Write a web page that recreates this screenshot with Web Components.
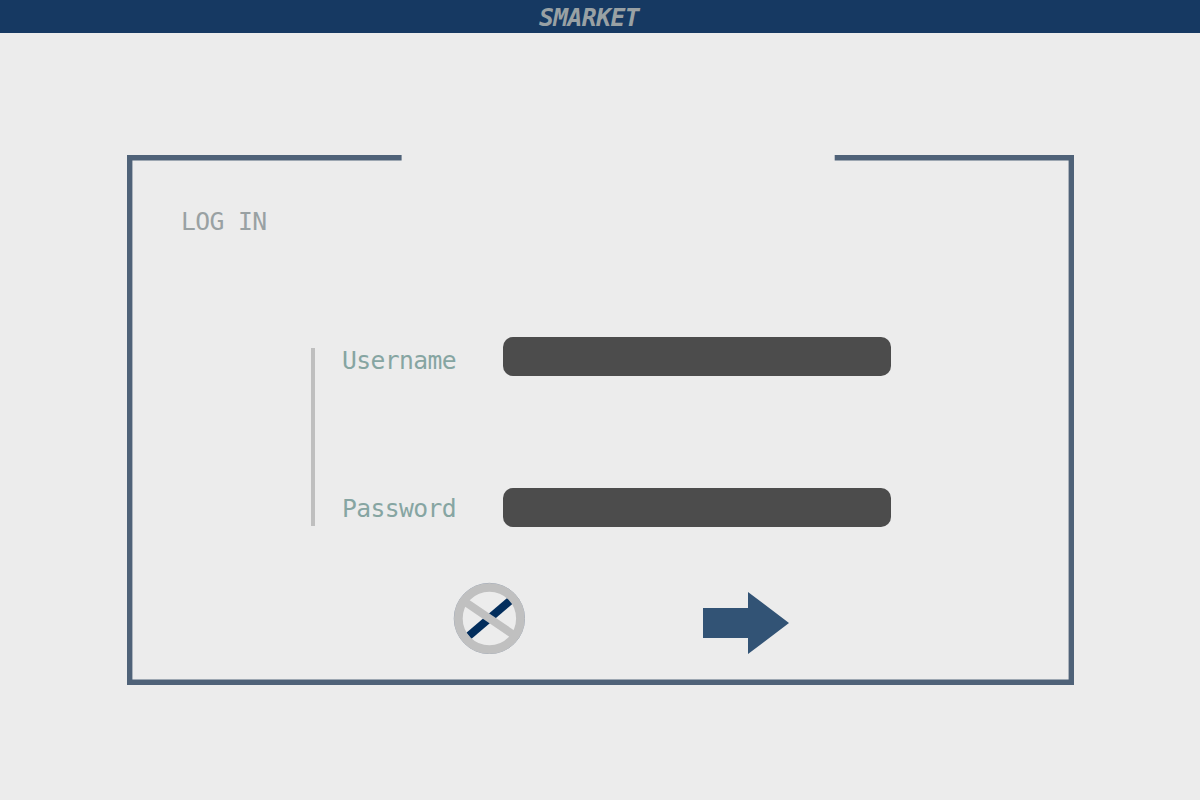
<!DOCTYPE html>
<html lang="en">
<head>
<meta charset="utf-8">
<title>Smarket</title>
<style>
body { margin: 0; background: #ececec; font-family: "DejaVu Sans Mono", monospace; }
</style>
</head>
<body>
<login-page></login-page>
<script>
function define(name, html) {
  customElements.define(name, class extends HTMLElement {
    constructor() {
      super();
      const t = document.createElement('template');
      t.innerHTML = html;
      this.attachShadow({ mode: 'open' }).appendChild(t.content.cloneNode(true));
    }
  });
}

define('app-header', `
<style>
:host { display: flex; justify-content: center; height: 33px; background: #163962; color: #99a1a4;
  box-sizing: border-box; padding-right: 22px; font: italic bold 24.7px/35px "DejaVu Sans Mono", monospace; letter-spacing: -.6px; }
</style><slot></slot>`);

define('open-frame', `
<style>
:host { display: grid; width: 947px; height: 530px; }
svg, .body { grid-area: 1 / 1; }
svg { display: block; }
.body { min-width: 0; z-index: 1; }
</style>
<svg width="947" height="530" viewBox="0 0 947 530" fill="#4f6278"><path d="M0 0H274.6V5.4H5.4V524.6H941.6V5.4H707.7V0H947V530H0Z"/></svg>
<div class="body"><slot></slot></div>`);

define('login-field', `
<style>
:host { display: grid; grid-template-columns: 161px 388px; height: 39px; color: #86a5a2; font-size: 24.7px; letter-spacing: -.6px; }
.label { line-height: 28px; padding-top: var(--label-drop, 10px); }
.input { height: 39px; border-radius: 10px; background: #4c4c4c; }
</style>
<div class="label"><slot></slot></div><div class="input"></div>`);

define('cancel-icon', `
<style>:host { display: block; width: 72px; height: 72px; } svg { display: block; }</style>
<svg width="72" height="72" viewBox="453 582 72 72" fill="none">
<path d="M468.7 636L510.3 600.5" stroke="#032e5d" stroke-width="8"/>
<circle cx="489.4" cy="618.5" r="35.2" stroke="#8c97a8" stroke-width=".8"/>
<path d="M466 602.5L513 634.5" stroke="#c0c0c0" stroke-width="8"/>
<circle cx="489.4" cy="618.5" r="31" stroke="#c0c0c0" stroke-width="8.6"/>
</svg>`);

define('arrow-icon', `
<style>:host { display: block; width: 87px; height: 63px; } svg { display: block; }</style>
<svg width="87" height="63" viewBox="703 592 87 63"><path d="M703 608H748V592L789 623L748 654V638H703Z" fill="#325375"/></svg>`);

define('login-page', `
<style>
:host { display: flex; flex-direction: column; height: 800px; }
open-frame { margin: 122px 0 0 127px; }
h1 { margin: 0; padding: 53px 0 0 54px; font-size: 24.7px; letter-spacing: -.6px; font-weight: 400; line-height: 28px; color: #99a1a3; }
.fields { display: flex; margin: 101px 0 0 184px; }
.rule { width: 4px; height: 178px; margin: 11px 27px 0 0; background: #bfbfbf; }
.rows { display: grid; gap: 112px; height: 190px; }
.second { --label-drop: 7px; }
.actions { display: flex; align-items: flex-start; gap: 178px; margin: 55px 0 0 326px; }
arrow-icon { margin-top: 10px; }
</style>
<app-header>SMARKET</app-header>
<open-frame>
  <h1>LOG IN</h1>
  <div class="fields"><div class="rule"></div>
    <div class="rows"><login-field>Username</login-field><login-field class="second">Password</login-field></div>
  </div>
  <div class="actions"><cancel-icon></cancel-icon><arrow-icon></arrow-icon></div>
</open-frame>`);
</script>
</body>
</html>
